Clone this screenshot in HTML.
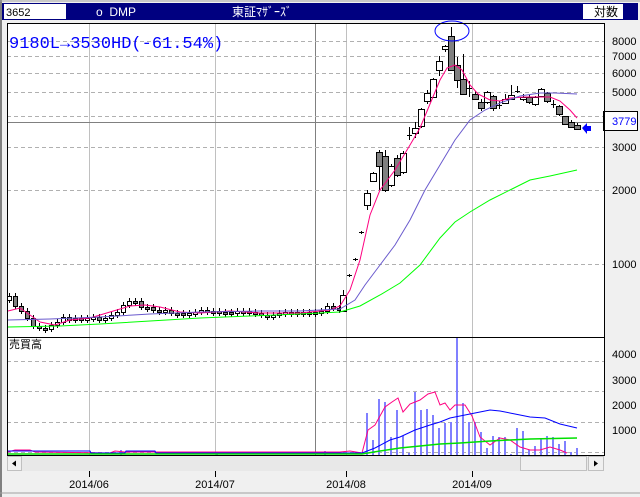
<!DOCTYPE html>
<html><head><meta charset="utf-8"><style>
html,body{margin:0;padding:0;width:640px;height:497px;overflow:hidden;background:#f0f0f0;font-family:"Liberation Sans","Noto Sans CJK JP",sans-serif}
svg{position:absolute;left:0;top:0}
text{font-family:"Liberation Sans","Noto Sans CJK JP",sans-serif}
</style></head><body>
<svg id="s" width="640" height="497" xmlns="http://www.w3.org/2000/svg">
<rect x="0" y="0" width="640" height="497" fill="#f0f0f0"/>
<line x1="1" y1="0" x2="1" y2="497" stroke="#808080" stroke-width="2"/>
<line x1="0" y1="1" x2="640" y2="1" stroke="#a0a0a0"/>
<rect x="2" y="3" width="636" height="17" fill="#000080"/>
<rect x="4" y="4" width="62" height="15" fill="#fff"/>
<text x="6" y="16" font-size="11" fill="#000">3652</text>
<text x="96" y="16" font-size="12" fill="#fff">o&#160;&#160;DMP</text>
<text x="232" y="16" font-size="12" fill="#fff">東証ﾏｻﾞｰｽﾞ</text>
<rect x="583" y="4" width="40" height="15" fill="#fff"/>
<text x="594" y="16" font-size="12" fill="#000">対数</text>
<rect x="7" y="23" width="597" height="432" fill="#fff"/>
<g stroke="#c0c0c0" stroke-width="1">
<line x1="89.5" y1="23" x2="89.5" y2="455"/><line x1="215.5" y1="23" x2="215.5" y2="455"/>
<line x1="346.5" y1="23" x2="346.5" y2="455"/><line x1="472.5" y1="23" x2="472.5" y2="455"/>
</g>
<line x1="315.5" y1="23" x2="315.5" y2="455" stroke="#808080"/>
<g stroke="#b0b0b0" stroke-dasharray="4,3">
<line x1="7" y1="41.5" x2="604" y2="41.5"/><line x1="7" y1="56.5" x2="604" y2="56.5"/>
<line x1="7" y1="73.5" x2="604" y2="73.5"/><line x1="7" y1="92.5" x2="604" y2="92.5"/>
<line x1="7" y1="116.5" x2="604" y2="116.5"/><line x1="7" y1="147.5" x2="604" y2="147.5"/>
<line x1="7" y1="190.5" x2="604" y2="190.5"/><line x1="7" y1="264.5" x2="604" y2="264.5"/>
<line x1="7" y1="361.5" x2="604" y2="361.5"/><line x1="7" y1="391.5" x2="604" y2="391.5"/>
<line x1="7" y1="422.5" x2="604" y2="422.5"/><line x1="7" y1="452.5" x2="604" y2="452.5"/>
</g>
<line x1="7" y1="122.5" x2="604" y2="122.5" stroke="#808080"/>
<g font-size="11" fill="#000">
<text x="612" y="45">8000</text><text x="612" y="60">7000</text><text x="612" y="77">6000</text>
<text x="612" y="96">5000</text><text x="612" y="151">3000</text><text x="612" y="194">2000</text>
<text x="612" y="268">1000</text>
<text x="612" y="358">4000</text><text x="612" y="384">3000</text><text x="612" y="409">2000</text><text x="612" y="434">1000</text>
</g>
<rect x="603.5" y="111.5" width="34" height="19" fill="#fff" stroke="#000"/>
<text x="612" y="125" font-size="11" fill="#0000ff">3779</text>
<g id="vol"></g>
<g id="cd"></g>
<polyline fill="none" stroke="#ff0080" points="8,311 20,308 30,315 40,322 55,325 70,320 90,318 110,312 130,306 145,305 160,307 180,312 200,313 230,311 260,313 300,313 330,310 340,306 350,290 360,260 370,215 380,190 395,170 410,145 420,128 430,104 440,80 447,68 455,65 462,70 470,85 478,94 490,100 500,101 510,98 525,97 540,97 550,97 560,101 570,110 577,118"/>
<polyline fill="none" stroke="#6a5acd" points="8,320 50,319 100,317 150,314 200,312 260,311 300,311 340,309 355,300 365,285 380,265 395,245 410,220 425,190 440,165 455,140 470,120 485,110 500,103 520,96 540,93 555,93 577,94"/>
<polyline fill="none" stroke="#00ff00" points="8,327 60,326 100,324 150,321 200,318 250,316 300,314 340,312 360,306 380,295 400,283 420,265 440,238 455,222 470,212 490,200 510,190 530,180 550,176 577,170"/>
<polyline fill="none" stroke="#ff0080" points="8,452 15,450 30,450 35,452 110,453 115,451 125,452 340,452 350,451 362,453 368,430 375,425 385,407 392,402 398,398 403,412 410,404 420,400 428,394 435,392 440,405 445,403 450,410 455,405 465,405 472,416 480,437 490,445 500,438 510,440 520,447 530,450 540,450 550,447 560,450 567,453"/>
<polyline fill="none" stroke="#0000ff" points="8,451 90,451 91,453 125,453 126,451 155,451 156,453 362,453 375,448 390,440 400,437 415,430 430,425 440,422 450,418 460,416 475,413 490,410 500,411 515,414 530,417 545,418 560,424 577,428"/>
<polyline fill="none" stroke="#00e000" stroke-width="1.5" points="8,454 362,454 380,451 400,448 420,446 440,444 460,443 490,441 510,440 530,439 577,438"/>
<ellipse cx="452" cy="31" rx="17" ry="10" fill="none" stroke="#0000ff"/>
<path d="M582,128 l5,-5 v3 h4 v5 h-4 v3 z" fill="#0000ff"/>
<text x="9" y="48" font-size="17" fill="#0000ff" style="font-family:'Liberation Mono',monospace">9180L→3530HD(-61.54%)</text>
<line x1="7" y1="337.5" x2="604" y2="337.5" stroke="#000"/>
<text x="9" y="348" font-size="11" fill="#000">売買高</text>
<rect x="7.5" y="23.5" width="597" height="432" fill="none" stroke="#000"/>
<rect x="7" y="456" width="597" height="15" fill="#e8e8e8"/>
<rect x="7.5" y="456.5" width="14" height="14" fill="#f0f0f0" stroke="#c0c0c0"/>
<path d="M12,463.5 l4,-3 v6z" fill="#000"/>
<rect x="520.5" y="456.5" width="66" height="14" fill="#f0f0f0" stroke="#c0c0c0"/>
<rect x="588.5" y="456.5" width="15" height="14" fill="#f0f0f0" stroke="#c0c0c0"/>
<path d="M598,463.5 l-4,-3 v6z" fill="#000"/>
<g stroke="#000"><line x1="89.5" y1="471" x2="89.5" y2="477"/><line x1="215.5" y1="471" x2="215.5" y2="477"/><line x1="346.5" y1="471" x2="346.5" y2="477"/><line x1="472.5" y1="471" x2="472.5" y2="477"/></g>
<g font-size="11" fill="#000" text-anchor="middle">
<text x="89" y="488">2014/06</text><text x="215" y="488">2014/07</text><text x="346" y="488">2014/08</text><text x="472" y="488">2014/09</text>
</g>
<line x1="0" y1="493" x2="640" y2="493" stroke="#a0a0a0"/>
</svg>
<script>
var NS="http://www.w3.org/2000/svg",cd=document.getElementById('cd'),vol=document.getElementById('vol');
function el(p,t,a){var e=document.createElementNS(NS,t);for(var k in a)e.setAttribute(k,a[k]);p.appendChild(e);}
var early=[296,306,311,318,326,328,329,325,322,317,320,318,320,318,317,320,318,315,312,305,301,301,307,307,310,312,310,313,313,314,313,312,310,311,311,312,312,313,311,311,312,313,315,316,315,313,312,313,312,313,312,313,311,306,308,310];
var prev=300;
for(var i=0;i<early.length;i++){var x=9+i*6,c=early[i],o=prev;
 var t=Math.min(o,c),b=Math.max(o,c);if(b-t<2){b=t+2;}
 el(cd,'line',{x1:x+.5,y1:t-3,x2:x+.5,y2:b+3,stroke:'#000'});
 el(cd,'rect',{x:x-1.5,y:t+.5,width:4,height:b-t,fill:c<o?'#fff':'#808080',stroke:'#000'});prev=c;}
var s=[[343,295,311,290,312,1],[349,275,276,274,277,2],[355,259,260,258,261,2],[361,232,233,231,234,2],
[367,193,205,190,210,1],[373,173,181,172,182,1],[379,152,166,150,190,0],[385,156,190,150,192,0],[391,166,185,164,187,1],[397,158,175,155,177,0],[403,153,172,151,174,1],[409,135,136,127,140,2],[415,128,133,122,138,1],[421,109,126,108,128,1],[427,93,101,90,104,1],[433,79,97,78,98,1],[439,61,70,56,76,1],[445,46,49,45,52,1],[451,36,70,27,70,0],[457,65,80,57,88,0],[463,79,94,54,95,0],[469,88,89,81,97,2],[475,94,99,91,100,0],[481,102,108,99,111,0],[487,92,102,91,104,1],[493,96,108,95,111,0],[499,105,106,101,109,2],[505,99,103,94,104,1],[511,95,99,85,100,1],[517,91,92,86,93,2],[523,97,99,94,101,1],[529,97,102,95,104,0],[535,97,104,96,106,1],[541,89,96,88,97,1],[547,93,101,92,103,0],[553,104,105,100,108,2],[559,106,114,105,116,0],[565,116,124,116,125,0],[571,122,127,120,128,0],[577,125,129,123,130,0]];
s.forEach(function(a){var x=a[0];el(cd,'line',{x1:x+.5,y1:a[3],x2:x+.5,y2:a[4],stroke:'#000'});
 if(a[5]==2)el(cd,'line',{x1:x-2,y1:a[1]+.5,x2:x+3,y2:a[1]+.5,stroke:'#000'});
 else el(cd,'rect',{x:x-2.5,y:a[1]+.5,width:6,height:a[2]-a[1],fill:a[5]?'#fff':'#808080',stroke:'#000'});});
var v=[[367,413],[373,440],[379,399],[385,402],[391,437],[397,410],[403,436],[409,453],[415,392],[421,410],[427,409],[433,415],[439,428],[445,423],[451,422],[457,338],[463,403],[469,422],[475,422],[481,432],[487,448],[493,436],[499,437],[505,437],[511,454],[517,428],[523,431],[529,450],[535,446],[541,438],[547,436],[553,437],[559,444],[565,441],[571,452],[577,448],[121,450],[325,451],[217,453]];
v.forEach(function(a){el(vol,'rect',{x:a[0]-1,y:a[1],width:2,height:455-a[1],fill:'#8080ff'});});
</script>
</body></html>
